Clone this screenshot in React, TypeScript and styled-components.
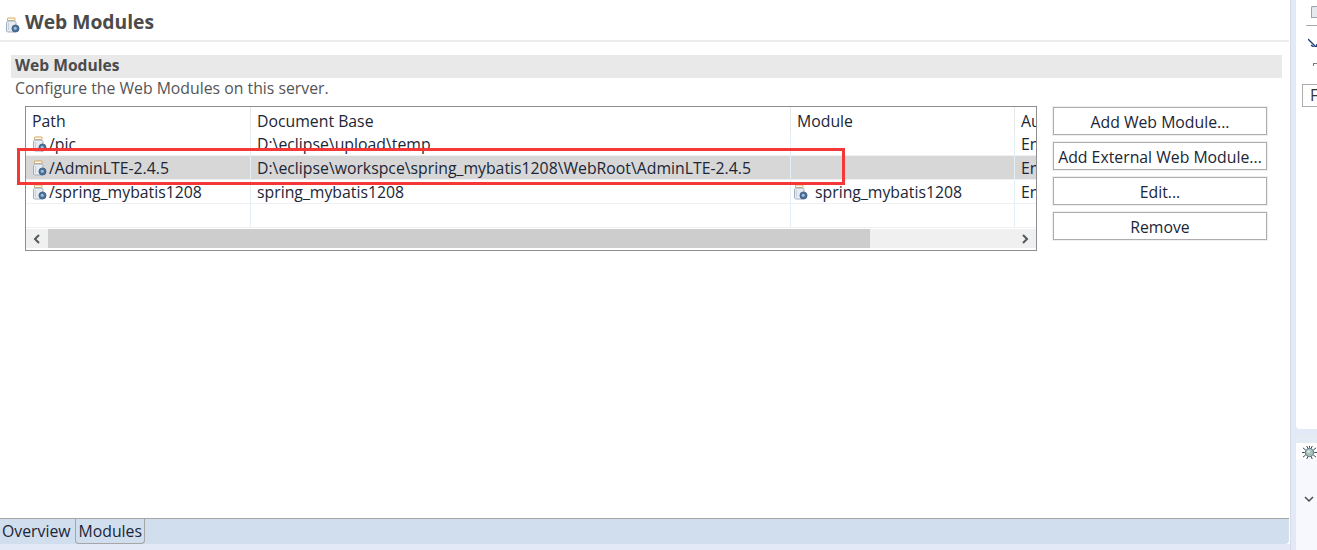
import styled, { createGlobalStyle } from 'styled-components'

const FONT = '"Open Sans", "Noto Sans", "Liberation Sans", sans-serif'

const GlobalStyle = createGlobalStyle`
  html, body {
    margin: 0;
    padding: 0;
    background: #fff;
    overflow: hidden;
  }
`

function JarIcon() {
  return (
    <svg width="16" height="16" viewBox="0 0 16 16">
      <rect x="2.5" y="1" width="7.5" height="2.5" rx="0.5" fill="#fff" stroke="#d9a44f" />
      <path d="M1.5 5.5 L2.5 4 H10 L11 5.5 V14 L10 15 H2.5 L1.5 14 Z" fill="#e6ebf1" stroke="#9fb0c2" />
      <path d="M3.5 6 V13" stroke="#c6d0dc" />
      <circle cx="10.5" cy="11.5" r="3.6" fill="#4a7099" stroke="#3a5878" strokeWidth="0.7" />
      <circle cx="10.2" cy="11.2" r="1.5" fill="#9fc0da" />
    </svg>
  )
}

function BugIcon() {
  return (
    <svg width="15" height="15" viewBox="0 0 16 16" fill="none">
      <path
        d="M1 3 L4 5.5 M0 8 H3 M1 13 L4 10.5 M15 3 L12 5.5 M16 8 H13 M15 13 L12 10.5 M5 1 L6.5 4 M11 1 L9.5 4 M8 1 V3 M5 15 L6.5 12 M11 15 L9.5 12"
        stroke="#2b3a4a"
        strokeWidth="1"
      />
      <circle cx="8" cy="8" r="4.4" fill="#a8c2b8" stroke="#4f6f80" />
      <circle cx="7" cy="7" r="1.6" fill="#d5e4e8" />
    </svg>
  )
}

const rows = [
  { path: '/pic', base: 'D:\\eclipse\\upload\\temp', module: '', selected: false },
  {
    path: '/AdminLTE-2.4.5',
    base: 'D:\\eclipse\\workspce\\spring_mybatis1208\\WebRoot\\AdminLTE-2.4.5',
    module: '',
    selected: true,
  },
  { path: '/spring_mybatis1208', base: 'spring_mybatis1208', module: 'spring_mybatis1208', selected: false },
]

function App() {
  return (
    <Page>
      <GlobalStyle />
      <Editor>
        <Header>
          <JarIcon />
          <HeaderTitle>Web Modules</HeaderTitle>
        </Header>
        <Content>
          <SectionBar>Web Modules</SectionBar>
          <SectionText>Configure the Web Modules on this server.</SectionText>
          <SectionBody>
            <Table>
              <HeadRow>
                <HeadCell>Path</HeadCell>
                <HeadCell>Document Base</HeadCell>
                <HeadCell>Module</HeadCell>
                <HeadCell>Au</HeadCell>
              </HeadRow>
              {rows.map((r) => (
                <Row key={r.path} $selected={r.selected}>
                  <Cell>
                    <JarIcon />
                    {r.path}
                  </Cell>
                  <Cell>{r.base}</Cell>
                  <Cell>
                    {r.module && (
                      <ModuleIcon>
                        <JarIcon />
                      </ModuleIcon>
                    )}
                    {r.module && <ModuleName>{r.module}</ModuleName>}
                  </Cell>
                  <Cell>En</Cell>
                </Row>
              ))}
              <Row $selected={false}>
                <Cell />
                <Cell />
                <Cell />
                <Cell />
              </Row>
              <Scrollbar>
                <ScrollArrow>
                  <svg width="10" height="10" viewBox="0 0 10 10" fill="none">
                    <path d="M7 1 L3 5 L7 9" stroke="#505a5a" strokeWidth="2" />
                  </svg>
                </ScrollArrow>
                <ScrollTrack>
                  <ScrollThumb />
                </ScrollTrack>
                <ScrollArrow>
                  <svg width="10" height="10" viewBox="0 0 10 10" fill="none">
                    <path d="M3 1 L7 5 L3 9" stroke="#505a5a" strokeWidth="2" />
                  </svg>
                </ScrollArrow>
              </Scrollbar>
              <Highlight />
            </Table>
            <Buttons>
              <Button>Add Web Module...</Button>
              <Button>Add External Web Module...</Button>
              <Button>Edit...</Button>
              <Button>Remove</Button>
            </Buttons>
          </SectionBody>
        </Content>
        <TabStrip>
          <Tab>Overview</Tab>
          <Tab $active>Modules</Tab>
        </TabStrip>
        <BottomEdge />
      </Editor>
      <Trim>
        <TrimTop>
          <TrimPage />
          <TrimLine />
          <TrimPin>
            <svg width="10" height="13" viewBox="0 0 10 13" fill="none">
              <path d="M0 1 L7 8 M5 11 L8 8 M3 7 L8 11 L9 6" stroke="#24407a" strokeWidth="1.4" />
            </svg>
          </TrimPin>
          <TrimCaret />
          <TrimBox>F</TrimBox>
        </TrimTop>
        <TrimBottom>
          <TrimBugRow>
            <BugIcon />
          </TrimBugRow>
          <TrimChevron>
            <svg width="10" height="7" viewBox="0 0 10 7" fill="none">
              <path d="M1 1 L5 5 L9 1" stroke="#4a4a4a" strokeWidth="1.5" />
            </svg>
          </TrimChevron>
        </TrimBottom>
      </Trim>
    </Page>
  )
}

const Page = styled.div`
  width: 1317px;
  height: 550px;
  display: flex;
  overflow: hidden;
  font-family: ${FONT};
  font-size: 15.8px;
  background: #e3e9f7;
`

const Editor = styled.div`
  width: 1291px;
  height: 550px;
  flex: none;
  display: flex;
  flex-direction: column;
  background: #fff;
  border-right: 1px solid #d6dbe6;
  box-sizing: border-box;
`

const Header = styled.div`
  height: 42px;
  box-sizing: border-box;
  flex: none;
  display: flex;
  align-items: center;
  gap: 4px;
  margin-right: 1px;
  padding: 0 0 0 5px;
  border-bottom: 2px solid #ececec;

  svg {
    margin-top: 9px;
  }
`

const HeaderTitle = styled.h1`
  margin: 4px 0 0;
  font-size: 19.3px;
  line-height: 26px;
  font-weight: 700;
  color: #4b4b4b;
`

const Content = styled.div`
  flex: 1;
  min-height: 0;
  padding: 13px 8px 0 11px;
`

const SectionBar = styled.div`
  height: 23px;
  line-height: 21px;
  padding-left: 4px;
  background: #e9e9e9;
  font-size: 15.6px;
  font-weight: 700;
  color: #4b4b4b;
`

const SectionText = styled.div`
  height: 28px;
  line-height: 21px;
  padding-left: 4px;
  color: #555;
`

const SectionBody = styled.div`
  display: flex;
  align-items: flex-start;
  gap: 16px;
  padding-left: 14px;
`

const Table = styled.div`
  position: relative;
  width: 1012px;
  height: 145px;
  box-sizing: border-box;
  border: 1px solid #8c8c92;
  color: #1b2636;
`

const columns = 'grid-template-columns: 225px 540px 224px 21px;'

const HeadRow = styled.div`
  display: grid;
  ${columns}
  height: 25px;
`

const HeadCell = styled.div`
  padding: 3px 0 0 6px;
  line-height: 22px;
  white-space: nowrap;
  overflow: hidden;
  border-right: 1px solid #e6e6e6;

  &:last-child {
    border-right: none;
  }
`

const Row = styled.div<{ $selected: boolean }>`
  display: grid;
  ${columns}
  height: 24px;
  box-sizing: border-box;
  border-bottom: 1px solid #eef0f2;
  background: ${(p) => (p.$selected ? '#d7d7d7' : '#fff')};
`

const Cell = styled.div`
  display: flex;
  align-items: center;
  gap: 1px;
  padding: 1px 0 0 6px;
  white-space: nowrap;
  overflow: hidden;
  border-right: 1px solid #e3eef5;

  &:last-child {
    border-right: none;
  }
`

const ModuleIcon = styled.span`
  display: flex;
  margin-left: -4px;
`

const ModuleName = styled.span`
  margin-left: 5px;
`

const Scrollbar = styled.div`
  display: flex;
  height: 19px;
  margin: 1px 0 0;
  background: #f0f0f0;
`

const ScrollArrow = styled.div`
  width: 22px;
  flex: none;
  display: flex;
  align-items: center;
  justify-content: center;
`

const ScrollTrack = styled.div`
  flex: 1;
  min-width: 0;
`

const ScrollThumb = styled.div`
  width: 822px;
  height: 100%;
  background: #cdcdcd;
`

const Highlight = styled.div`
  position: absolute;
  left: -9px;
  top: 41px;
  width: 828px;
  height: 37px;
  box-sizing: border-box;
  border: 3px solid #f53737;
  pointer-events: none;
`

const Buttons = styled.div`
  width: 214px;
  padding-top: 1px;
  display: flex;
  flex-direction: column;
  gap: 7px;
`

const Button = styled.button`
  height: 28px;
  padding: 1px 0 0;
  box-sizing: border-box;
  border: 1px solid #adadad;
  box-shadow: 0 0 0 1px #efefef;
  background: #fff;
  font-family: ${FONT};
  font-size: 15.8px;
  color: #1b2636;
  white-space: nowrap;
`

const TabStrip = styled.div`
  flex: none;
  height: 26px;
  box-sizing: border-box;
  display: flex;
  margin-right: 1px;
  border-top: 1px solid #a6a6a6;
  border-radius: 0 0 4px 0;
  background: #d0deee;
`

const Tab = styled.div<{ $active?: boolean }>`
  height: 24px;
  line-height: 24px;
  padding: 0 4px 0 2px;
  color: #1b2636;
  ${(p) =>
    p.$active &&
    `
    padding: 0 2px 0 3px;
    border: 1px solid #a6a6a6;
    border-top: none;
    border-radius: 0 0 4px 4px;
  `}
`

const BottomEdge = styled.div`
  flex: none;
  height: 6px;
  background: #e3e9f7;
`

const Trim = styled.div`
  flex: 1;
  margin-left: 5px;
  height: 550px;
  display: flex;
  flex-direction: column;
  background: #e3e9f7;
  overflow: hidden;
`

const TrimTop = styled.div`
  height: 429px;
  flex: none;
  background: #fff;
  border-radius: 0 0 0 4px;
  overflow: hidden;
  display: flex;
  flex-direction: column;
  align-items: flex-end;
`

const TrimPage = styled.div`
  width: 6px;
  height: 12px;
  margin-top: 6px;
  flex: none;
  box-sizing: border-box;
  border: 1px solid #9aa3ad;
  border-right: none;
  border-radius: 2px 0 0 0;
  background: #e6e9ed;
`

const TrimLine = styled.div`
  width: 11px;
  height: 1px;
  margin-top: 7px;
  flex: none;
  background: #a8a8a8;
`

const TrimPin = styled.div`
  width: 9px;
  height: 13px;
  margin-top: 8px;
  flex: none;
  overflow: hidden;
`

const TrimCaret = styled.div`
  width: 4px;
  height: 3px;
  margin-top: 16px;
  flex: none;
  border-top: 1px solid #7a7a7a;
  border-left: 1px solid #7a7a7a;
  box-sizing: border-box;
`

const TrimBox = styled.div`
  width: 15px;
  height: 23px;
  margin-top: 18px;
  padding-left: 7px;
  flex: none;
  box-sizing: border-box;
  border: 1px solid #adadad;
  border-right: none;
  background: #fff;
  line-height: 21px;
  color: #333;
  overflow: hidden;
`

const TrimBottom = styled.div`
  margin-top: 5px;
  flex: 1;
  background: #f6f8fd;
  border-radius: 5px 0 0 0;
  display: flex;
  flex-direction: column;
`

const TrimBugRow = styled.div`
  height: 25px;
  padding: 9px 0 0 6px;
  box-sizing: border-box;
  background: linear-gradient(#e3ebf3 0, #e3ebf3 9px, #fff 9px);
  flex: none;
  overflow: hidden;
`

const TrimChevron = styled.div`
  margin-top: 37px;
  padding-left: 8px;
  line-height: 0;
`

export default App
